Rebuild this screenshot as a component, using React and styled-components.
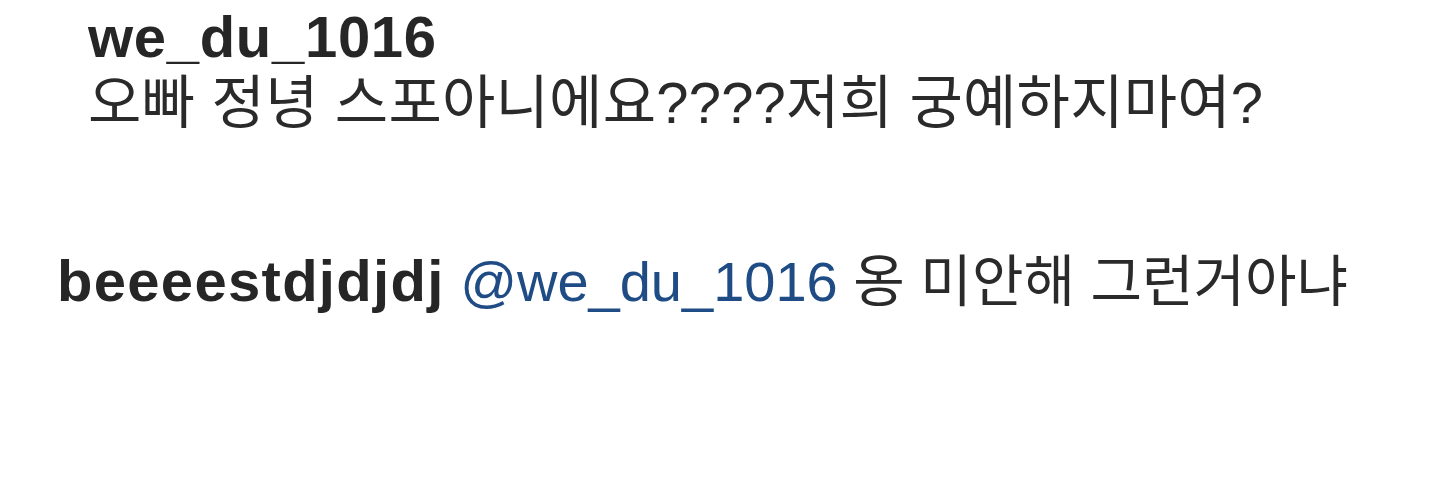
import React from "react"
import styled, { createGlobalStyle } from "styled-components"

const GlobalStyle = createGlobalStyle`
  html, body {
    margin: 0;
    padding: 0;
    background: #ffffff;
  }
  body {
    font-family: "Liberation Sans", "Noto Sans CJK KR", sans-serif;
    color: #262626;
  }
`

const Page = styled.div`
  width: 1440px;
  height: 480px;
  overflow: hidden;
  background: #ffffff;
`

const Comment = styled.div`
  padding-left: ${props => props.indent}px;
  margin-top: ${props => props.top}px;
`

const Username = styled.div`
  font-size: 58px;
  font-weight: 700;
  letter-spacing: 0.7px;
  line-height: 64px;
  color: #262626;
`

const Body = styled.div`
  margin-top: 2px;
  font-size: 58px;
  font-weight: 400;
  letter-spacing: 0.2px;
  line-height: 64px;
  color: #2a2a2a;
  white-space: nowrap;
`

const Line = styled.div`
  font-size: 56px;
  line-height: 64px;
  white-space: nowrap;
  color: #2a2a2a;
`

const Name = styled.span`
  font-size: 58px;
  font-weight: 700;
  letter-spacing: 1.3px;
  color: #262626;
`

const Mention = styled.span`
  color: #1f4c84;
`

const App = () => {
  return (
    <Page>
      <GlobalStyle />
      <Comment indent={88} top={5}>
        <Username>we_du_1016</Username>
        <Body>오빠 정녕 스포아니에요????저희 궁예하지마여?</Body>
      </Comment>
      <Comment indent={57} top={114}>
        <Line>
          <Name>beeeestdjdjdj</Name> <Mention>@we_du_1016</Mention> 옹 미안해 그런거아냐
        </Line>
      </Comment>
    </Page>
  )
}

export default App
